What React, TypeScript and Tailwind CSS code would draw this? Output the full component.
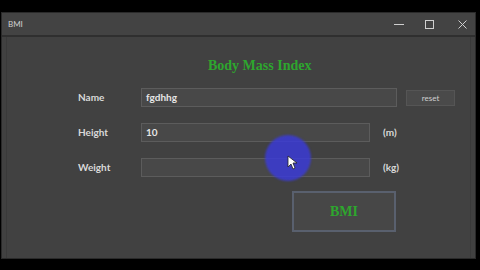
import React from 'react';

const sans = { fontFamily: '"Lato", "Open Sans", "Liberation Sans", sans-serif' };
const serif = { fontFamily: '"Liberation Serif", "DejaVu Serif", serif' };

function Field({ label, value, wide, unit, extra }: { label: string; value: string; wide?: boolean; unit?: string; extra?: React.ReactNode }) {
  return (
    <div className="flex h-[19px] items-center">
      <div className="w-[63px] text-[10px] font-bold text-[#d9d9d9]" style={sans}>
        {label}
      </div>
      <div
        className={`flex h-full items-center border border-[#5c5c5c] bg-[#484848] pl-[4px] text-[10px] font-bold text-[#e6e6e6] ${wide ? 'w-[256px]' : 'w-[229px]'}`}
        style={sans}
      >
        {value}
      </div>
      {unit && (
        <div className="ml-[13px] text-[10px] font-bold text-[#d9d9d9]" style={sans}>
          {unit}
        </div>
      )}
      {extra}
    </div>
  );
}

export default function App() {
  return (
    <div className="h-[270px] w-[480px] overflow-hidden bg-black pt-[12px]">
      <div className="relative ml-[1px] flex h-[247px] w-[475px] flex-col border border-[#2a2a2a] bg-[#414141]">
        {/* title bar */}
        <div className="flex h-[22px] items-center bg-[#434343] pl-[6px]">
          <span className="text-[8px] text-[#cfcfcf]" style={sans}>BMI</span>
          <div className="ml-auto flex h-full items-center text-[#cfcfcf]">
            <svg width="10" height="10" viewBox="0 0 10 10" className="mr-[21px]">
              <path d="M0 5.5h10" stroke="currentColor" strokeWidth="1" />
            </svg>
            <svg width="9" height="9" viewBox="0 0 9 9" className="mr-[24px]">
              <rect x="0.5" y="0.5" width="8" height="8" fill="none" stroke="currentColor" strokeWidth="1" />
            </svg>
            <svg width="9" height="9" viewBox="0 0 9 9" className="mr-[8px]">
              <path d="M0.5 0.5l8 8M8.5 0.5l-8 8" stroke="currentColor" strokeWidth="1" />
            </svg>
          </div>
        </div>
        <div className="h-[2px] bg-[#2f2f2f]" />
        <div className="mx-[4px] flex flex-1 flex-col border-x border-[#3a3a3a] pl-[71px]">
          <div className="mt-[18px] pl-[130px] text-[14px] font-bold text-[#2ea62e]" style={serif}>
            Body Mass Index
          </div>
          <div className="mt-[12px] flex flex-col gap-[16px]">
            <Field
              label="Name"
              value="fgdhhg"
              wide
              extra={
                <div
                  className="ml-[9px] flex h-[16px] w-[49px] items-center justify-center border border-[#555] bg-[#4a4a4a] text-[8px] text-[#d0d0d0]"
                  style={sans}
                >
                  reset
                </div>
              }
            />
            <Field label="Height" value="10" unit="(m)" />
            <Field label="Weight" value="" unit="(kg)" />
          </div>
          <div className="mt-[14px] ml-[214px] flex h-[41px] w-[104px] items-center justify-center border-2 border-[#59606e] bg-[#474747] text-[14px] font-bold text-[#2ea62e]" style={serif}>
            BMI
          </div>
        </div>
        {/* cursor highlight */}
        <div className="absolute left-[263px] top-[122px] h-[46px] w-[46px] rounded-full bg-[#3b3bd6]/85 blur-[1px]" />
        <svg className="absolute left-[285px] top-[142px]" width="10" height="15" viewBox="0 0 10 15">
          <path d="M1 1v11l3-3 2 5 2-1-2-5h4z" fill="#fff" stroke="#222" strokeWidth="0.8" />
        </svg>
      </div>
    </div>
  );
}
